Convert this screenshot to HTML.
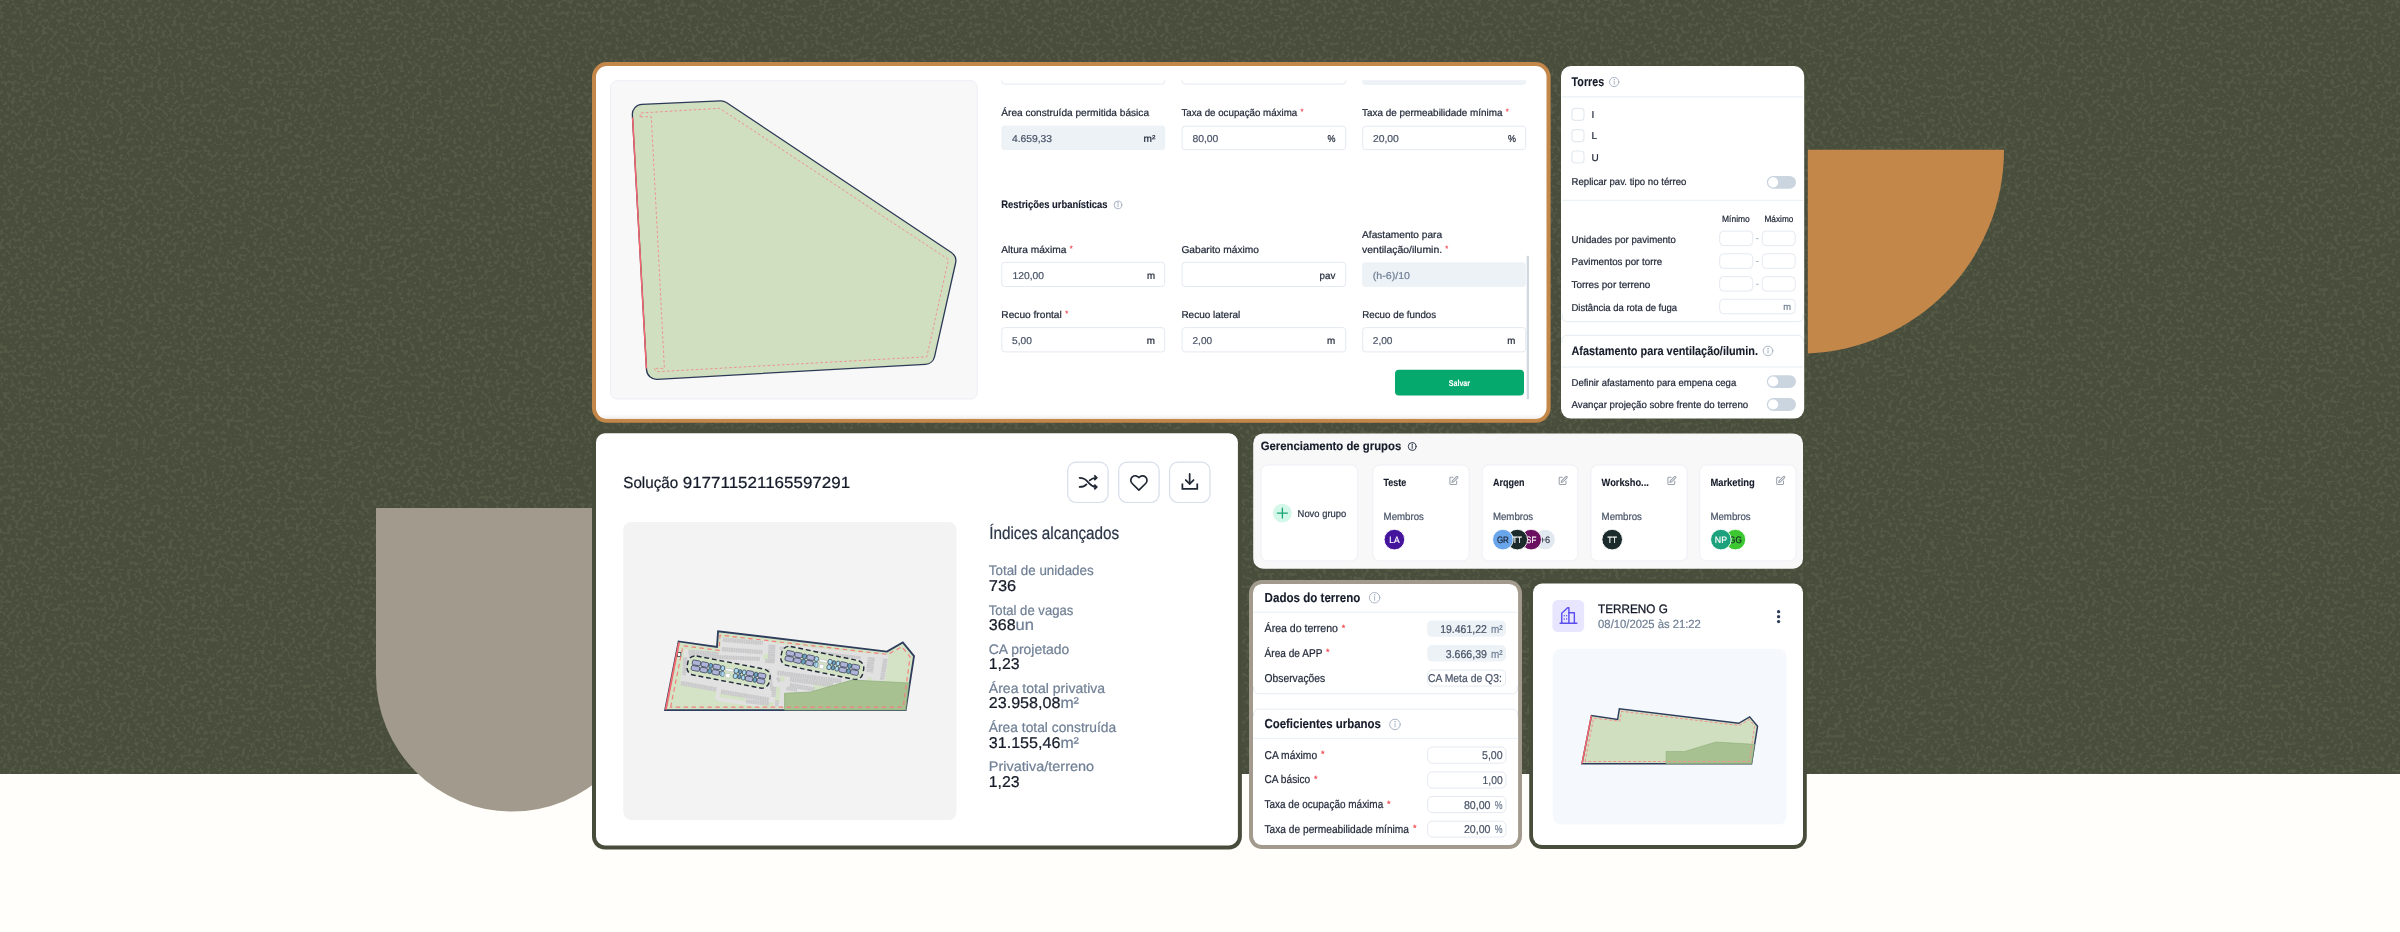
<!DOCTYPE html>
<html lang="pt-BR"><head><meta charset="utf-8"><title>Arqgen</title>
<style>
html,body{margin:0;padding:0;background:#fffefa;}
body{width:2400px;height:932px;overflow:hidden;position:relative;font-family:"Liberation Sans", sans-serif;}
svg{position:absolute;left:0;top:0;display:block;font-family:"Liberation Sans", sans-serif;will-change:transform;text-rendering:geometricPrecision;}
text{white-space:pre;}
</style></head><body>
<svg width="2400" height="932" viewBox="0 0 2400 932">
<defs>
<filter id="grain" x="0" y="0" width="100%" height="100%" color-interpolation-filters="sRGB">
<feTurbulence type="fractalNoise" baseFrequency="0.26" numOctaves="2" seed="7" result="n"/>
<feColorMatrix in="n" type="matrix" values="0 0 0 0 0.345  0 0 0 0 0.365  0 0 0 0 0.285  10 0 0 0 -5.3"/>
</filter>
</defs>
<rect x="0.00" y="0.00" width="2400.00" height="774.00" fill="#494e3c" />
<rect x="0" y="0" width="2400" height="774" filter="url(#grain)" opacity="0.75"/>
<rect x="0.00" y="774.00" width="2400.00" height="158.00" fill="#fffefa" />
<path d="M1807.8 149.8H2004A203.5 203.5 0 0 1 1807.8 353.4Z" fill="#c4874a"/>
<path d="M376 508H648V675.5A136 136 0 0 1 376 675.5Z" fill="#a29b8d"/>
<rect x="592.00" y="62.00" width="958.60" height="360.80" rx="15" fill="#c4874a" />
<rect x="596.00" y="66.00" width="950.50" height="352.70" rx="11" fill="#ffffff" />
<linearGradient id="c1sh" x1="0" y1="0" x2="0" y2="1"><stop offset="0" stop-color="#ffffff"/><stop offset="1" stop-color="#eeeeee"/></linearGradient><clipPath id="c1in"><rect x="596" y="66" width="950.5" height="352.7" rx="11"/></clipPath>
<rect x="596" y="414.2" width="950.5" height="4.5" fill="url(#c1sh)" clip-path="url(#c1in)"/>
<rect x="610.60" y="80.70" width="366.60" height="318.30" rx="6.5" fill="#f8f8f9" stroke="#eceff4" stroke-width="1" />
<path d="M632.36 114.89A10 10 0 0 1 641.90 104.35L720.43 100.85A10 10 0 0 1 726.42 102.52L951.38 252.49A10 10 0 0 1 955.59 263.00L934.56 356.53A10 10 0 0 1 925.36 364.32L657.09 379.34A10 10 0 0 1 646.54 369.91Z" fill="#d1dfc1" stroke="#2c3a57" stroke-width="1.3"/>
<path d="M632.6 117.5L646.4 368.5" stroke="#f4646c" stroke-width="1.5" fill="none"/>
<path d="M640.2 117V113L719.6 108.3L948.5 259.5L926.8 356.8L657.3 371.7L653.7 368.4H664.4L651.3 116.8H640.2" fill="none" stroke="#f47f83" stroke-width="0.8" stroke-dasharray="2.6 2.2"/>
<clipPath id="c1clip"><rect x="990" y="80.3" width="545" height="30"/></clipPath>
<g clip-path="url(#c1clip)">
<rect x="1001.80" y="60.50" width="163.00" height="23.60" rx="3.0" fill="#fff" stroke="#e4e9f0" stroke-width="1" />
<rect x="1182.10" y="60.50" width="163.60" height="23.60" rx="3.0" fill="#fff" stroke="#e4e9f0" stroke-width="1" />
<rect x="1362.20" y="60.00" width="164.00" height="24.90" rx="3.5" fill="#edf2f7" />
</g>
<text x="1001.30" y="116.00" font-size="10" fill="#1f2636" textLength="147.70" lengthAdjust="spacingAndGlyphs"  stroke="#1f2636" stroke-width="0.22">Área construída permitida básica</text>
<text x="1181.40" y="116.00" font-size="10" fill="#1f2636" textLength="115.80" lengthAdjust="spacingAndGlyphs"  stroke="#1f2636" stroke-width="0.22">Taxa de ocupação máxima</text>
<text x="1300.50" y="114.10" font-size="7.6" fill="#f0424a"  stroke="#f0424a" stroke-width="0.2">*</text>
<text x="1362.10" y="116.00" font-size="10" fill="#1f2636" textLength="140.40" lengthAdjust="spacingAndGlyphs"  stroke="#1f2636" stroke-width="0.22">Taxa de permeabilidade mínima</text>
<text x="1505.80" y="114.10" font-size="7.6" fill="#f0424a"  stroke="#f0424a" stroke-width="0.2">*</text>
<rect x="1001.30" y="125.50" width="163.90" height="24.60" rx="3.5" fill="#edf2f7" />
<rect x="1182.10" y="126.20" width="163.60" height="23.40" rx="3.0" fill="#fff" stroke="#e4e9f0" stroke-width="1" />
<rect x="1362.70" y="126.20" width="163.00" height="23.40" rx="3.0" fill="#fff" stroke="#e4e9f0" stroke-width="1" />
<text x="1011.90" y="141.60" font-size="10" fill="#4a5568" textLength="40.20" lengthAdjust="spacingAndGlyphs"  stroke="#4a5568" stroke-width="0.22">4.659,33</text>
<text x="1143.50" y="141.60" font-size="10" fill="#1f2636" textLength="11.80" lengthAdjust="spacingAndGlyphs"  stroke="#1f2636" stroke-width="0.22">m²</text>
<text x="1192.40" y="141.60" font-size="10" fill="#4a5568" textLength="26.00" lengthAdjust="spacingAndGlyphs"  stroke="#4a5568" stroke-width="0.22">80,00</text>
<text x="1327.40" y="141.60" font-size="10" fill="#1f2636" textLength="8.00" lengthAdjust="spacingAndGlyphs"  stroke="#1f2636" stroke-width="0.22">%</text>
<text x="1372.90" y="141.60" font-size="10" fill="#4a5568" textLength="26.00" lengthAdjust="spacingAndGlyphs"  stroke="#4a5568" stroke-width="0.22">20,00</text>
<text x="1507.90" y="141.60" font-size="10" fill="#1f2636" textLength="8.00" lengthAdjust="spacingAndGlyphs"  stroke="#1f2636" stroke-width="0.22">%</text>
<text x="1001.30" y="208.30" font-size="10.8" fill="#151b29" font-weight="700" textLength="106.20" lengthAdjust="spacingAndGlyphs"  stroke="#151b29" stroke-width="0.12">Restrições urbanísticas</text>
<g stroke="#a0aec0" fill="none" stroke-width="0.9" stroke-linecap="round"><circle cx="1118.00" cy="204.90" r="3.85"/><path d="M1118.00 204.04V206.79"/><circle cx="1118.00" cy="202.75" r="0.2" /></g>
<text x="1001.30" y="252.90" font-size="10" fill="#1f2636" textLength="65.00" lengthAdjust="spacingAndGlyphs"  stroke="#1f2636" stroke-width="0.22">Altura máxima</text>
<text x="1069.70" y="251.00" font-size="7.6" fill="#f0424a"  stroke="#f0424a" stroke-width="0.2">*</text>
<text x="1181.40" y="252.90" font-size="10" fill="#1f2636" textLength="77.60" lengthAdjust="spacingAndGlyphs"  stroke="#1f2636" stroke-width="0.22">Gabarito máximo</text>
<text x="1362.10" y="237.50" font-size="10" fill="#1f2636" textLength="80.00" lengthAdjust="spacingAndGlyphs"  stroke="#1f2636" stroke-width="0.22">Afastamento para</text>
<text x="1362.10" y="252.90" font-size="10" fill="#1f2636" textLength="80.00" lengthAdjust="spacingAndGlyphs"  stroke="#1f2636" stroke-width="0.22">ventilação/ilumin.</text>
<text x="1445.30" y="251.00" font-size="7.6" fill="#f0424a"  stroke="#f0424a" stroke-width="0.2">*</text>
<rect x="1001.80" y="262.30" width="162.90" height="24.20" rx="3.0" fill="#fff" stroke="#e4e9f0" stroke-width="1" />
<rect x="1182.10" y="262.30" width="163.60" height="24.20" rx="3.0" fill="#fff" stroke="#e4e9f0" stroke-width="1" />
<rect x="1362.20" y="262.20" width="163.60" height="24.70" rx="3.5" fill="#edf2f7" />
<text x="1012.50" y="278.70" font-size="10" fill="#4a5568" textLength="31.50" lengthAdjust="spacingAndGlyphs"  stroke="#4a5568" stroke-width="0.22">120,00</text>
<text x="1146.90" y="278.70" font-size="10" fill="#1f2636" textLength="8.10" lengthAdjust="spacingAndGlyphs"  stroke="#1f2636" stroke-width="0.22">m</text>
<text x="1319.60" y="278.60" font-size="10" fill="#1f2636" textLength="15.80" lengthAdjust="spacingAndGlyphs"  stroke="#1f2636" stroke-width="0.22">pav</text>
<text x="1372.80" y="278.70" font-size="10" fill="#718096" textLength="37.20" lengthAdjust="spacingAndGlyphs"  stroke="#718096" stroke-width="0.22">(h-6)/10</text>
<text x="1001.30" y="317.90" font-size="10" fill="#1f2636" textLength="60.50" lengthAdjust="spacingAndGlyphs"  stroke="#1f2636" stroke-width="0.22">Recuo frontal</text>
<text x="1065.30" y="316.00" font-size="7.6" fill="#f0424a"  stroke="#f0424a" stroke-width="0.2">*</text>
<text x="1181.40" y="317.90" font-size="10" fill="#1f2636" textLength="58.90" lengthAdjust="spacingAndGlyphs"  stroke="#1f2636" stroke-width="0.22">Recuo lateral</text>
<text x="1362.20" y="317.90" font-size="10" fill="#1f2636" textLength="74.00" lengthAdjust="spacingAndGlyphs"  stroke="#1f2636" stroke-width="0.22">Recuo de fundos</text>
<rect x="1001.80" y="327.60" width="162.90" height="24.30" rx="3.0" fill="#fff" stroke="#e4e9f0" stroke-width="1" />
<rect x="1182.10" y="327.60" width="163.60" height="24.30" rx="3.0" fill="#fff" stroke="#e4e9f0" stroke-width="1" />
<rect x="1362.70" y="327.60" width="163.00" height="24.30" rx="3.0" fill="#fff" stroke="#e4e9f0" stroke-width="1" />
<text x="1012.00" y="343.70" font-size="10" fill="#4a5568" textLength="19.80" lengthAdjust="spacingAndGlyphs"  stroke="#4a5568" stroke-width="0.22">5,00</text>
<text x="1146.70" y="343.70" font-size="10" fill="#1f2636" textLength="8.20" lengthAdjust="spacingAndGlyphs"  stroke="#1f2636" stroke-width="0.22">m</text>
<text x="1192.50" y="343.70" font-size="10" fill="#4a5568" textLength="19.60" lengthAdjust="spacingAndGlyphs"  stroke="#4a5568" stroke-width="0.22">2,00</text>
<text x="1327.10" y="343.70" font-size="10" fill="#1f2636" textLength="8.20" lengthAdjust="spacingAndGlyphs"  stroke="#1f2636" stroke-width="0.22">m</text>
<text x="1372.80" y="343.70" font-size="10" fill="#4a5568" textLength="19.70" lengthAdjust="spacingAndGlyphs"  stroke="#4a5568" stroke-width="0.22">2,00</text>
<text x="1507.30" y="343.70" font-size="10" fill="#1f2636" textLength="8.10" lengthAdjust="spacingAndGlyphs"  stroke="#1f2636" stroke-width="0.22">m</text>
<rect x="1395.00" y="369.70" width="129.00" height="25.90" rx="4" fill="#05a86d" />
<text x="1448.80" y="386.00" font-size="8.5" fill="#ffffff" font-weight="700" textLength="21.20" lengthAdjust="spacingAndGlyphs"  stroke="#ffffff" stroke-width="0.12">Salvar</text>
<rect x="1526.70" y="255.80" width="2.30" height="143.40" fill="#cfd8e0" />
<rect x="1561.00" y="66.00" width="243.20" height="352.60" rx="10" fill="#ffffff" />
<text x="1571.60" y="85.80" font-size="12.8" fill="#151b29" font-weight="700" textLength="32.60" lengthAdjust="spacingAndGlyphs"  stroke="#151b29" stroke-width="0.12">Torres</text>
<g stroke="#a0aec0" fill="none" stroke-width="0.9" stroke-linecap="round"><circle cx="1614.20" cy="82.00" r="4.65"/><path d="M1614.20 80.98V84.24"/><circle cx="1614.20" cy="79.45" r="0.2" /></g>
<rect x="1562.00" y="96.20" width="241.20" height="1.40" fill="#edf2f7" />
<rect x="1571.90" y="108.40" width="12.10" height="12.00" rx="3.4" fill="#fff" stroke="#e4e9f0" stroke-width="1.2" />
<text x="1591.60" y="118.30" font-size="10" fill="#1f2636"  stroke="#1f2636" stroke-width="0.22">I</text>
<rect x="1571.90" y="129.70" width="12.10" height="12.00" rx="3.4" fill="#fff" stroke="#e4e9f0" stroke-width="1.2" />
<text x="1591.60" y="139.40" font-size="10" fill="#1f2636"  stroke="#1f2636" stroke-width="0.22">L</text>
<rect x="1571.90" y="151.00" width="12.10" height="12.00" rx="3.4" fill="#fff" stroke="#e4e9f0" stroke-width="1.2" />
<text x="1591.60" y="160.60" font-size="10" fill="#1f2636"  stroke="#1f2636" stroke-width="0.22">U</text>
<text x="1571.50" y="185.40" font-size="10" fill="#1f2636" textLength="114.90" lengthAdjust="spacingAndGlyphs"  stroke="#1f2636" stroke-width="0.22">Replicar pav. tipo no térreo</text>
<rect x="1766.80" y="176.00" width="29.20" height="12.70" rx="6.349999999999994" fill="#cbd5e0" />
<circle cx="1773.15" cy="182.35" r="5.05" fill="#fff"/>
<rect x="1562.00" y="199.70" width="241.20" height="1.30" fill="#edf2f7" />
<text x="1722.00" y="221.70" font-size="9" fill="#1f2636" textLength="27.80" lengthAdjust="spacingAndGlyphs"  stroke="#1f2636" stroke-width="0.22">Mínimo</text>
<text x="1764.50" y="221.70" font-size="9" fill="#1f2636" textLength="28.90" lengthAdjust="spacingAndGlyphs"  stroke="#1f2636" stroke-width="0.22">Máximo</text>
<text x="1571.50" y="242.60" font-size="10" fill="#1f2636" textLength="104.40" lengthAdjust="spacingAndGlyphs"  stroke="#1f2636" stroke-width="0.22">Unidades por pavimento</text>
<rect x="1719.70" y="231.10" width="33.00" height="14.50" rx="4.0" fill="#fff" stroke="#e4e9f0" stroke-width="1" />
<rect x="1762.20" y="231.10" width="33.00" height="14.50" rx="4.0" fill="#fff" stroke="#e4e9f0" stroke-width="1" />
<rect x="1756.00" y="238.25" width="2.60" height="0.90" fill="#a0aec0" />
<text x="1571.50" y="265.30" font-size="10" fill="#1f2636" textLength="90.60" lengthAdjust="spacingAndGlyphs"  stroke="#1f2636" stroke-width="0.22">Pavimentos por torre</text>
<rect x="1719.70" y="253.80" width="33.00" height="14.60" rx="4.0" fill="#fff" stroke="#e4e9f0" stroke-width="1" />
<rect x="1762.20" y="253.80" width="33.00" height="14.60" rx="4.0" fill="#fff" stroke="#e4e9f0" stroke-width="1" />
<rect x="1756.00" y="261.00" width="2.60" height="0.90" fill="#a0aec0" />
<text x="1571.50" y="288.10" font-size="10" fill="#1f2636" textLength="78.90" lengthAdjust="spacingAndGlyphs"  stroke="#1f2636" stroke-width="0.22">Torres por terreno</text>
<rect x="1719.70" y="276.60" width="33.00" height="14.50" rx="4.0" fill="#fff" stroke="#e4e9f0" stroke-width="1" />
<rect x="1762.20" y="276.60" width="33.00" height="14.50" rx="4.0" fill="#fff" stroke="#e4e9f0" stroke-width="1" />
<rect x="1756.00" y="283.75" width="2.60" height="0.90" fill="#a0aec0" />
<text x="1571.50" y="311.00" font-size="10" fill="#1f2636" textLength="105.60" lengthAdjust="spacingAndGlyphs"  stroke="#1f2636" stroke-width="0.22">Distância da rota de fuga</text>
<rect x="1719.70" y="299.20" width="75.50" height="14.60" rx="4.0" fill="#fff" stroke="#e4e9f0" stroke-width="1" />
<text x="1783.30" y="310.20" font-size="9.5" fill="#718096" textLength="7.80" lengthAdjust="spacingAndGlyphs"  stroke="#718096" stroke-width="0.22">m</text>
<path d="M1562 314V317A5 5 0 0 0 1567 321.6H1798.2A5 5 0 0 0 1803.2 317V314" fill="none" stroke="#e6ebf2" stroke-width="1"/>
<path d="M1562 343V340.3A5 5 0 0 1 1567 335.3H1798.2A5 5 0 0 1 1803.2 340.3V343" fill="none" stroke="#e6ebf2" stroke-width="1"/>
<text x="1571.50" y="354.60" font-size="12.4" fill="#151b29" font-weight="700" textLength="186.50" lengthAdjust="spacingAndGlyphs"  stroke="#151b29" stroke-width="0.12">Afastamento para ventilação/ilumin.</text>
<g stroke="#a0aec0" fill="none" stroke-width="0.9" stroke-linecap="round"><circle cx="1768.00" cy="350.90" r="4.80"/><path d="M1768.00 349.85V353.21"/><circle cx="1768.00" cy="348.27" r="0.2" /></g>
<rect x="1562.00" y="366.40" width="241.20" height="1.30" fill="#edf2f7" />
<text x="1571.50" y="385.50" font-size="10" fill="#1f2636" textLength="164.70" lengthAdjust="spacingAndGlyphs"  stroke="#1f2636" stroke-width="0.22">Definir afastamento para empena cega</text>
<rect x="1766.80" y="375.20" width="29.20" height="12.70" rx="6.349999999999994" fill="#cbd5e0" />
<circle cx="1773.15" cy="381.55" r="5.05" fill="#fff"/>
<text x="1571.50" y="408.30" font-size="10" fill="#1f2636" textLength="176.70" lengthAdjust="spacingAndGlyphs"  stroke="#1f2636" stroke-width="0.22">Avançar projeção sobre frente do terreno</text>
<rect x="1766.80" y="398.10" width="29.20" height="12.80" rx="6.399999999999977" fill="#cbd5e0" />
<circle cx="1773.20" cy="404.50" r="5.10" fill="#fff"/>
<rect x="592.00" y="429.30" width="649.90" height="420.20" rx="13" fill="#484d3b" />
<rect x="596.00" y="433.30" width="641.90" height="412.20" rx="9" fill="#ffffff" />
<text x="623.30" y="488.10" font-size="16" fill="#151b29" textLength="54.80" lengthAdjust="spacingAndGlyphs"  stroke="#151b29" stroke-width="0.22">Solução</text>
<text x="682.70" y="488.10" font-size="16" fill="#151b29" textLength="167.40" lengthAdjust="spacingAndGlyphs"  stroke="#151b29" stroke-width="0.22">917711521165597291</text>
<rect x="623.30" y="521.90" width="333.30" height="298.10" rx="8" fill="#f3f3f3" />
<rect x="1067.70" y="462.10" width="40.40" height="40.40" rx="8.4" fill="#fff" stroke="#d6deea" stroke-width="1.2" />
<rect x="1118.70" y="462.10" width="40.40" height="40.40" rx="8.4" fill="#fff" stroke="#d6deea" stroke-width="1.2" />
<rect x="1169.60" y="462.10" width="40.40" height="40.40" rx="8.4" fill="#fff" stroke="#d6deea" stroke-width="1.2" />
<g transform="translate(1050,450) scale(0.075092)" fill="none" stroke="#1f2733" stroke-width="23" stroke-linecap="round" stroke-linejoin="miter"><path d="M394 370C470 370 482 402 510 432S560 492 612 492"/><path d="M394 492C440 492 466 480 486 458"/><path d="M528 406C550 385 580 370 612 370"/><path d="M590 338L622 370L590 402" stroke-linecap="butt"/><path d="M590 460L622 492L590 524" stroke-linecap="butt"/></g>
<g transform="translate(1128.1,472.2) scale(0.9)" fill="none" stroke="#1f2733" stroke-width="1.85" stroke-linecap="round" stroke-linejoin="round"><path d="M19.5 12.572l-7.5 7.428l-7.5 -7.428a5 5 0 1 1 7.5 -6.566a5 5 0 1 1 7.5 6.572"/></g>
<g transform="translate(1050,450) scale(0.075092)" fill="none" stroke="#1f2733" stroke-width="23" stroke-linecap="butt" stroke-linejoin="miter"><path d="M1860 318V450" stroke-linecap="round"/><path d="M1808 400L1860 452L1912 400" stroke-linecap="round" stroke-linejoin="round"/><path d="M1763 446V519H1961V446"/></g>
<text x="989.20" y="539.40" font-size="17.6" fill="#2d3748" textLength="130.00" lengthAdjust="spacingAndGlyphs"  stroke="#2d3748" stroke-width="0.22">Índices alcançados</text>
<text x="988.80" y="575.30" font-size="13.8" fill="#718096" textLength="104.90" lengthAdjust="spacingAndGlyphs"  stroke="#718096" stroke-width="0.22">Total de unidades</text>
<text x="988.80" y="590.70" font-size="15.6" fill="#151b29" textLength="27.40" lengthAdjust="spacingAndGlyphs"  stroke="#151b29" stroke-width="0.22">736</text>
<text x="988.80" y="614.50" font-size="13.8" fill="#718096" textLength="84.50" lengthAdjust="spacingAndGlyphs"  stroke="#718096" stroke-width="0.22">Total de vagas</text>
<text x="988.80" y="629.90" font-size="15.6" fill="#151b29" textLength="26.80" lengthAdjust="spacingAndGlyphs"  stroke="#151b29" stroke-width="0.22">368</text>
<text x="1015.60" y="629.90" font-size="15.6" fill="#718096" textLength="18.40" lengthAdjust="spacingAndGlyphs"  stroke="#718096" stroke-width="0.22">un</text>
<text x="988.80" y="653.70" font-size="13.8" fill="#718096" textLength="80.50" lengthAdjust="spacingAndGlyphs"  stroke="#718096" stroke-width="0.22">CA projetado</text>
<text x="988.80" y="669.10" font-size="15.6" fill="#151b29" textLength="30.90" lengthAdjust="spacingAndGlyphs"  stroke="#151b29" stroke-width="0.22">1,23</text>
<text x="988.80" y="692.90" font-size="13.8" fill="#718096" textLength="116.30" lengthAdjust="spacingAndGlyphs"  stroke="#718096" stroke-width="0.22">Área total privativa</text>
<text x="988.80" y="708.30" font-size="15.6" fill="#151b29" textLength="71.60" lengthAdjust="spacingAndGlyphs"  stroke="#151b29" stroke-width="0.22">23.958,08</text>
<text x="1060.40" y="708.30" font-size="15.6" fill="#718096" textLength="18.50" lengthAdjust="spacingAndGlyphs"  stroke="#718096" stroke-width="0.22">m²</text>
<text x="988.80" y="732.10" font-size="13.8" fill="#718096" textLength="127.40" lengthAdjust="spacingAndGlyphs"  stroke="#718096" stroke-width="0.22">Área total construída</text>
<text x="988.80" y="747.50" font-size="15.6" fill="#151b29" textLength="71.60" lengthAdjust="spacingAndGlyphs"  stroke="#151b29" stroke-width="0.22">31.155,46</text>
<text x="1060.40" y="747.50" font-size="15.6" fill="#718096" textLength="18.50" lengthAdjust="spacingAndGlyphs"  stroke="#718096" stroke-width="0.22">m²</text>
<text x="988.80" y="771.30" font-size="13.8" fill="#718096" textLength="105.30" lengthAdjust="spacingAndGlyphs"  stroke="#718096" stroke-width="0.22">Privativa/terreno</text>
<text x="988.80" y="786.70" font-size="15.6" fill="#151b29" textLength="30.90" lengthAdjust="spacingAndGlyphs"  stroke="#151b29" stroke-width="0.22">1,23</text>
<g transform="translate(660,625) scale(0.09655)">
<path d="M53 881.5L193 170L590 228L601.5 65L2351 275L2515 181.5L2631 321.5L2544 881.5Z" fill="#d4e3c5"/>
<path d="M250 250L622 282L632 128L1100 163L1225 192L2090 290L2286 300L2366 312L2331 580L1986 570L1556 695L1346 700L1290 705L1290 850L1180 850L1180 800L1060 800L1040 850L610 790L570 760L585 690L215 620L210 590Z" fill="#e1e1e1"/>
<g fill="#d4e3c5"><path d="M1075 300L1140 305L1135 365L1070 360Z"/><path d="M620 705L885 750L880 790L612 745Z"/><path d="M1245 530L1290 535L1288 585L1243 580Z"/><path d="M1195 640L1245 645L1240 800L1190 795Z"/><path d="M1600 615L1800 585L1790 640L1560 690Z"/><path d="M2150 540L2190 542L2188 575L2148 573Z"/></g>
<path d="M650 152L1065 186" stroke="#c9c9cb" stroke-width="45" stroke-dasharray="20 4" fill="none"/>
<path d="M640 250L1060 282" stroke="#c9c9cb" stroke-width="45" stroke-dasharray="20 4" fill="none"/>
<path d="M295 275L610 300" stroke="#c9c9cb" stroke-width="41" stroke-dasharray="20 4" fill="none"/>
<path d="M300 318L1035 352" stroke="#c9c9cb" stroke-width="43" stroke-dasharray="20 4" fill="none"/>
<path d="M1160 205L1150 395" stroke="#c9c9cb" stroke-width="73" stroke-dasharray="20 4" fill="none"/>
<path d="M1090 372L1185 380" stroke="#c9c9cb" stroke-width="39" stroke-dasharray="20 4" fill="none"/>
<path d="M262 335L250 520" stroke="#c9c9cb" stroke-width="41" stroke-dasharray="20 4" fill="none"/>
<path d="M218 602L585 668" stroke="#c9c9cb" stroke-width="47" stroke-dasharray="20 4" fill="none"/>
<path d="M632 690L1130 775" stroke="#c9c9cb" stroke-width="47" stroke-dasharray="20 4" fill="none"/>
<path d="M890 790L1130 815" stroke="#c9c9cb" stroke-width="43" stroke-dasharray="20 4" fill="none"/>
<path d="M1185 640L1175 745" stroke="#c9c9cb" stroke-width="43" stroke-dasharray="20 4" fill="none"/>
<path d="M1212 780L1208 840" stroke="#c9c9cb" stroke-width="37" stroke-dasharray="20 4" fill="none"/>
<path d="M1215 495L1880 585" stroke="#c9c9cb" stroke-width="49" stroke-dasharray="20 4" fill="none"/>
<path d="M1346 562L1790 622" stroke="#c9c9cb" stroke-width="49" stroke-dasharray="20 4" fill="none"/>
<path d="M1346 622L1600 668" stroke="#c9c9cb" stroke-width="47" stroke-dasharray="20 4" fill="none"/>
<path d="M1310 655L1420 672" stroke="#c9c9cb" stroke-width="39" stroke-dasharray="20 4" fill="none"/>
<path d="M2190 335L2170 490" stroke="#c9c9cb" stroke-width="73" stroke-dasharray="20 4" fill="none"/>
<path d="M2335 350L2300 570" stroke="#c9c9cb" stroke-width="47" stroke-dasharray="20 4" fill="none"/>
<path d="M1215 545L1240 590" stroke="#c9c9cb" stroke-width="33" stroke-dasharray="20 4" fill="none"/>
<path d="M1240 240L2080 340" stroke="#c9c9cb" stroke-width="33" stroke-dasharray="20 4" fill="none"/>
<path d="M1120 455L1165 690" stroke="#c9c9cb" stroke-width="33" stroke-dasharray="20 4" fill="none"/>
<g transform="translate(710,487) rotate(11)">
<rect x="-433" y="-100" width="866" height="200" rx="78" fill="#d4e3c5" stroke="#232a3a" stroke-width="15" stroke-dasharray="50 30"/>
<rect x="-387" y="-54" width="86" height="50" rx="14" fill="#aeb3d8" stroke="#2e3550" stroke-width="7"/>
<rect x="-387" y="4" width="86" height="50" rx="14" fill="#aeb3d8" stroke="#2e3550" stroke-width="7"/>
<rect x="-295" y="-54" width="76" height="50" rx="14" fill="#aeb3d8" stroke="#2e3550" stroke-width="7"/>
<rect x="-295" y="4" width="76" height="50" rx="14" fill="#aeb3d8" stroke="#2e3550" stroke-width="7"/>
<rect x="-212" y="-52" width="37" height="48" rx="14" fill="#6aa6c2" stroke="#2e3550" stroke-width="7"/>
<rect x="-212" y="4" width="37" height="48" rx="14" fill="#6aa6c2" stroke="#2e3550" stroke-width="7"/>
<rect x="-168" y="-54" width="76" height="50" rx="14" fill="#aeb3d8" stroke="#2e3550" stroke-width="7"/>
<rect x="-168" y="4" width="76" height="50" rx="14" fill="#aeb3d8" stroke="#2e3550" stroke-width="7"/>
<rect x="-86" y="-52" width="38" height="48" rx="14" fill="#aadcef" stroke="#2e3550" stroke-width="7"/>
<rect x="-86" y="4" width="38" height="48" rx="14" fill="#aadcef" stroke="#2e3550" stroke-width="7"/>
<rect x="-36" y="-34" width="82" height="24" fill="#fff" stroke="#8a8fa5" stroke-width="3"/>
<rect x="-70" y="8" width="30" height="50" rx="6" fill="#aadcef" stroke="#3c425c" stroke-width="4"/>
<rect x="-22" y="16" width="44" height="44" fill="#fff" stroke="#8a8fa5" stroke-width="3"/>
<rect x="56" y="-52" width="41" height="48" rx="14" fill="#aadcef" stroke="#2e3550" stroke-width="7"/>
<rect x="56" y="4" width="41" height="48" rx="14" fill="#aadcef" stroke="#2e3550" stroke-width="7"/>
<rect x="103" y="-48" width="30" height="44" rx="14" fill="#6aa6c2" stroke="#2e3550" stroke-width="7"/>
<rect x="103" y="4" width="30" height="44" rx="14" fill="#6aa6c2" stroke="#2e3550" stroke-width="7"/>
<rect x="142" y="-52" width="36" height="48" rx="14" fill="#aadcef" stroke="#2e3550" stroke-width="7"/>
<rect x="142" y="4" width="36" height="48" rx="14" fill="#aadcef" stroke="#2e3550" stroke-width="7"/>
<rect x="184" y="-54" width="76" height="50" rx="14" fill="#aeb3d8" stroke="#2e3550" stroke-width="7"/>
<rect x="184" y="4" width="76" height="50" rx="14" fill="#aeb3d8" stroke="#2e3550" stroke-width="7"/>
<rect x="266" y="-52" width="35" height="48" rx="14" fill="#6aa6c2" stroke="#2e3550" stroke-width="7"/>
<rect x="266" y="4" width="35" height="48" rx="14" fill="#6aa6c2" stroke="#2e3550" stroke-width="7"/>
<rect x="306" y="-54" width="81" height="50" rx="14" fill="#aeb3d8" stroke="#2e3550" stroke-width="7"/>
<rect x="306" y="4" width="81" height="50" rx="14" fill="#aeb3d8" stroke="#2e3550" stroke-width="7"/>
</g>
<g transform="translate(1681,393) rotate(11.8)">
<rect x="-433" y="-100" width="866" height="200" rx="78" fill="#d4e3c5" stroke="#232a3a" stroke-width="15" stroke-dasharray="50 30"/>
<rect x="-387" y="-54" width="86" height="50" rx="14" fill="#aeb3d8" stroke="#2e3550" stroke-width="7"/>
<rect x="-387" y="4" width="86" height="50" rx="14" fill="#aeb3d8" stroke="#2e3550" stroke-width="7"/>
<rect x="-295" y="-54" width="76" height="50" rx="14" fill="#aeb3d8" stroke="#2e3550" stroke-width="7"/>
<rect x="-295" y="4" width="76" height="50" rx="14" fill="#aeb3d8" stroke="#2e3550" stroke-width="7"/>
<rect x="-212" y="-52" width="37" height="48" rx="14" fill="#6aa6c2" stroke="#2e3550" stroke-width="7"/>
<rect x="-212" y="4" width="37" height="48" rx="14" fill="#6aa6c2" stroke="#2e3550" stroke-width="7"/>
<rect x="-168" y="-54" width="76" height="50" rx="14" fill="#aeb3d8" stroke="#2e3550" stroke-width="7"/>
<rect x="-168" y="4" width="76" height="50" rx="14" fill="#aeb3d8" stroke="#2e3550" stroke-width="7"/>
<rect x="-86" y="-52" width="38" height="48" rx="14" fill="#aadcef" stroke="#2e3550" stroke-width="7"/>
<rect x="-86" y="4" width="38" height="48" rx="14" fill="#aadcef" stroke="#2e3550" stroke-width="7"/>
<rect x="-36" y="-34" width="82" height="24" fill="#fff" stroke="#8a8fa5" stroke-width="3"/>
<rect x="-70" y="8" width="30" height="50" rx="6" fill="#aadcef" stroke="#3c425c" stroke-width="4"/>
<rect x="-22" y="16" width="44" height="44" fill="#fff" stroke="#8a8fa5" stroke-width="3"/>
<rect x="56" y="-52" width="41" height="48" rx="14" fill="#aadcef" stroke="#2e3550" stroke-width="7"/>
<rect x="56" y="4" width="41" height="48" rx="14" fill="#aadcef" stroke="#2e3550" stroke-width="7"/>
<rect x="103" y="-48" width="30" height="44" rx="14" fill="#6aa6c2" stroke="#2e3550" stroke-width="7"/>
<rect x="103" y="4" width="30" height="44" rx="14" fill="#6aa6c2" stroke="#2e3550" stroke-width="7"/>
<rect x="142" y="-52" width="36" height="48" rx="14" fill="#aadcef" stroke="#2e3550" stroke-width="7"/>
<rect x="142" y="4" width="36" height="48" rx="14" fill="#aadcef" stroke="#2e3550" stroke-width="7"/>
<rect x="184" y="-54" width="76" height="50" rx="14" fill="#aeb3d8" stroke="#2e3550" stroke-width="7"/>
<rect x="184" y="4" width="76" height="50" rx="14" fill="#aeb3d8" stroke="#2e3550" stroke-width="7"/>
<rect x="266" y="-52" width="35" height="48" rx="14" fill="#6aa6c2" stroke="#2e3550" stroke-width="7"/>
<rect x="266" y="4" width="35" height="48" rx="14" fill="#6aa6c2" stroke="#2e3550" stroke-width="7"/>
<rect x="306" y="-54" width="81" height="50" rx="14" fill="#aeb3d8" stroke="#2e3550" stroke-width="7"/>
<rect x="306" y="4" width="81" height="50" rx="14" fill="#aeb3d8" stroke="#2e3550" stroke-width="7"/>
</g>
<rect x="182" y="285" width="34" height="40" fill="#fff" stroke="#232a3a" stroke-width="8"/>
<path d="M53 881.5L193 170L590 228L601.5 65L2351 275L2515 181.5L2631 321.5L2544 881.5Z" fill="none" stroke="#2f3d5c" stroke-width="19" stroke-linejoin="miter"/>
<path d="M1290 881L1290 707L1556 695L1990 570L2578 600L2544 881Z" fill="#a7c191" stroke="#8fae79" stroke-width="7"/>
<path d="M110 850L238 215L612 262L622 105L2360 305L2505 225L2590 330L2520 850Z" fill="none" stroke="#f47f80" stroke-width="12" stroke-dasharray="46 36"/>
<path d="M60 876L197 180" stroke="#f26a70" stroke-width="20"/>
</g>
<rect x="1253.20" y="433.40" width="549.80" height="135.30" rx="10" fill="#f8f8f8" />
<text x="1260.70" y="450.40" font-size="12.2" fill="#151b29" font-weight="700" textLength="140.60" lengthAdjust="spacingAndGlyphs"  stroke="#151b29" stroke-width="0.12">Gerenciamento de grupos</text>
<g stroke="#2d3748" fill="none" stroke-width="1.0" stroke-linecap="round"><circle cx="1412.20" cy="446.50" r="3.90"/><path d="M1412.20 445.62V448.44"/><circle cx="1412.20" cy="444.30" r="0.2" /></g>
<rect x="1261.00" y="465.00" width="96.70" height="95.90" rx="6.5" fill="#ffffff" stroke="#edf0f5" stroke-width="1" />
<rect x="1372.90" y="465.00" width="96.20" height="95.90" rx="6.5" fill="#ffffff" stroke="#edf0f5" stroke-width="1" />
<rect x="1482.20" y="465.00" width="95.70" height="95.90" rx="6.5" fill="#ffffff" stroke="#edf0f5" stroke-width="1" />
<rect x="1590.90" y="465.00" width="96.20" height="95.90" rx="6.5" fill="#ffffff" stroke="#edf0f5" stroke-width="1" />
<rect x="1699.70" y="465.00" width="96.20" height="95.90" rx="6.5" fill="#ffffff" stroke="#edf0f5" stroke-width="1" />
<circle cx="1282.4" cy="513.1" r="9.4" fill="#d3f7e8"/>
<path d="M1277.4 513.1H1287.4M1282.4 508.1V518.1" stroke="#17a673" stroke-width="1.3" fill="none" stroke-linecap="round"/>
<text x="1297.60" y="516.70" font-size="10" fill="#2d3748" textLength="48.60" lengthAdjust="spacingAndGlyphs"  stroke="#2d3748" stroke-width="0.22">Novo grupo</text>
<text x="1383.60" y="485.70" font-size="10.6" fill="#151b29" font-weight="700" textLength="22.60" lengthAdjust="spacingAndGlyphs"  stroke="#151b29" stroke-width="0.12">Teste</text>
<g transform="translate(1448.70,475.60) scale(0.4000)" fill="none" stroke="#9aa1ab" stroke-width="2.6" stroke-linecap="round" stroke-linejoin="round"><path d="M11 4H5a2 2 0 0 0 -2 2v14a2 2 0 0 0 2 2h13a2 2 0 0 0 2 -2v-6.5"/><path d="M19.5 2.5a2.1 2.1 0 0 1 3 3L12 16l-4 1l1 -4Z"/></g>
<text x="1383.60" y="520.00" font-size="10.4" fill="#4a5568" textLength="40.30" lengthAdjust="spacingAndGlyphs"  stroke="#4a5568" stroke-width="0.22">Membros</text>
<text x="1492.90" y="485.70" font-size="10.6" fill="#151b29" font-weight="700" textLength="31.50" lengthAdjust="spacingAndGlyphs"  stroke="#151b29" stroke-width="0.12">Arqgen</text>
<g transform="translate(1558.00,475.60) scale(0.4000)" fill="none" stroke="#9aa1ab" stroke-width="2.6" stroke-linecap="round" stroke-linejoin="round"><path d="M11 4H5a2 2 0 0 0 -2 2v14a2 2 0 0 0 2 2h13a2 2 0 0 0 2 -2v-6.5"/><path d="M19.5 2.5a2.1 2.1 0 0 1 3 3L12 16l-4 1l1 -4Z"/></g>
<text x="1492.90" y="520.00" font-size="10.4" fill="#4a5568" textLength="40.30" lengthAdjust="spacingAndGlyphs"  stroke="#4a5568" stroke-width="0.22">Membros</text>
<text x="1601.60" y="485.70" font-size="10.6" fill="#151b29" font-weight="700" textLength="47.20" lengthAdjust="spacingAndGlyphs"  stroke="#151b29" stroke-width="0.12">Worksho...</text>
<g transform="translate(1666.70,475.60) scale(0.4000)" fill="none" stroke="#9aa1ab" stroke-width="2.6" stroke-linecap="round" stroke-linejoin="round"><path d="M11 4H5a2 2 0 0 0 -2 2v14a2 2 0 0 0 2 2h13a2 2 0 0 0 2 -2v-6.5"/><path d="M19.5 2.5a2.1 2.1 0 0 1 3 3L12 16l-4 1l1 -4Z"/></g>
<text x="1601.60" y="520.00" font-size="10.4" fill="#4a5568" textLength="40.30" lengthAdjust="spacingAndGlyphs"  stroke="#4a5568" stroke-width="0.22">Membros</text>
<text x="1710.40" y="485.70" font-size="10.6" fill="#151b29" font-weight="700" textLength="44.40" lengthAdjust="spacingAndGlyphs"  stroke="#151b29" stroke-width="0.12">Marketing</text>
<g transform="translate(1775.50,475.60) scale(0.4000)" fill="none" stroke="#9aa1ab" stroke-width="2.6" stroke-linecap="round" stroke-linejoin="round"><path d="M11 4H5a2 2 0 0 0 -2 2v14a2 2 0 0 0 2 2h13a2 2 0 0 0 2 -2v-6.5"/><path d="M19.5 2.5a2.1 2.1 0 0 1 3 3L12 16l-4 1l1 -4Z"/></g>
<text x="1710.40" y="520.00" font-size="10.4" fill="#4a5568" textLength="40.30" lengthAdjust="spacingAndGlyphs"  stroke="#4a5568" stroke-width="0.22">Membros</text>
<circle cx="1394.40" cy="539.60" r="10.3" fill="#44149c" stroke="#ffffff" stroke-width="0.9"/>
<text x="1394.40" y="542.95" font-size="9.2" fill="#ffffff" text-anchor="middle" textLength="10.40" lengthAdjust="spacingAndGlyphs"  stroke="#ffffff" stroke-width="0.15">LA</text>
<circle cx="1545.00" cy="539.60" r="10.3" fill="#e2e8f0" stroke="#ffffff" stroke-width="0.9"/>
<text x="1545.00" y="542.95" font-size="9.2" fill="#2d3748" text-anchor="middle" textLength="10.60" lengthAdjust="spacingAndGlyphs"  stroke="#2d3748" stroke-width="0.15">+6</text>
<circle cx="1531.20" cy="539.60" r="10.3" fill="#6b1060" stroke="#ffffff" stroke-width="0.9"/>
<text x="1531.20" y="542.95" font-size="9.2" fill="#ffffff" text-anchor="middle" textLength="10.20" lengthAdjust="spacingAndGlyphs"  stroke="#ffffff" stroke-width="0.15">SF</text>
<circle cx="1517.30" cy="539.60" r="10.3" fill="#1b2b2b" stroke="#ffffff" stroke-width="0.9"/>
<text x="1517.30" y="542.95" font-size="9.2" fill="#ffffff" text-anchor="middle" textLength="9.40" lengthAdjust="spacingAndGlyphs"  stroke="#ffffff" stroke-width="0.15">TT</text>
<circle cx="1502.90" cy="539.60" r="10.3" fill="#69a5ea" stroke="#ffffff" stroke-width="0.9"/>
<text x="1502.90" y="542.95" font-size="9.2" fill="#151b29" text-anchor="middle" textLength="12.00" lengthAdjust="spacingAndGlyphs"  stroke="#151b29" stroke-width="0.15">GR</text>
<circle cx="1612.20" cy="539.60" r="10.3" fill="#1b2b2b" stroke="#ffffff" stroke-width="0.9"/>
<text x="1612.20" y="542.95" font-size="9.2" fill="#ffffff" text-anchor="middle" textLength="9.40" lengthAdjust="spacingAndGlyphs"  stroke="#ffffff" stroke-width="0.15">TT</text>
<circle cx="1735.40" cy="539.60" r="10.3" fill="#3dc831" stroke="#ffffff" stroke-width="0.9"/>
<text x="1735.40" y="542.95" font-size="9.2" fill="#151b29" text-anchor="middle" textLength="12.80" lengthAdjust="spacingAndGlyphs"  stroke="#151b29" stroke-width="0.15">GG</text>
<circle cx="1720.90" cy="539.60" r="10.3" fill="#1ba17b" stroke="#ffffff" stroke-width="0.9"/>
<text x="1720.90" y="542.95" font-size="9.2" fill="#ffffff" text-anchor="middle" textLength="12.20" lengthAdjust="spacingAndGlyphs"  stroke="#ffffff" stroke-width="0.15">NP</text>
<rect x="1249.00" y="580.10" width="273.00" height="268.90" rx="13" fill="#a29b8d" />
<rect x="1253.00" y="583.90" width="265.10" height="261.20" rx="9" fill="#ffffff" />
<text x="1264.60" y="601.80" font-size="13" fill="#151b29" font-weight="700" textLength="95.80" lengthAdjust="spacingAndGlyphs"  stroke="#151b29" stroke-width="0.12">Dados do terreno</text>
<g stroke="#a0aec0" fill="none" stroke-width="0.9" stroke-linecap="round"><circle cx="1374.60" cy="597.70" r="5.25"/><path d="M1374.60 596.56V600.21"/><circle cx="1374.60" cy="594.85" r="0.2" /></g>
<rect x="1253.00" y="611.60" width="265.10" height="1.30" fill="#edf2f7" />
<text x="1264.60" y="632.40" font-size="11.4" fill="#1f2636" textLength="73.40" lengthAdjust="spacingAndGlyphs"  stroke="#1f2636" stroke-width="0.22">Área do terreno</text>
<text x="1264.60" y="656.80" font-size="11.4" fill="#1f2636" textLength="57.80" lengthAdjust="spacingAndGlyphs"  stroke="#1f2636" stroke-width="0.22">Área de APP</text>
<text x="1264.60" y="681.90" font-size="11.4" fill="#1f2636" textLength="60.50" lengthAdjust="spacingAndGlyphs"  stroke="#1f2636" stroke-width="0.22">Observações</text>
<text x="1341.70" y="630.92" font-size="9" fill="#f0424a"  stroke="#f0424a" stroke-width="0.2">*</text>
<text x="1326.10" y="655.32" font-size="9" fill="#f0424a"  stroke="#f0424a" stroke-width="0.2">*</text>
<rect x="1427.20" y="620.60" width="78.80" height="16.20" rx="5" fill="#edf2f7" />
<rect x="1427.20" y="645.00" width="78.80" height="16.50" rx="5" fill="#edf2f7" />
<rect x="1427.70" y="670.00" width="77.80" height="16.10" rx="4.5" fill="#fff" stroke="#e4e9f0" stroke-width="1" />
<text x="1440.20" y="633.10" font-size="11.4" fill="#4a5568" textLength="46.70" lengthAdjust="spacingAndGlyphs"  stroke="#4a5568" stroke-width="0.22">19.461,22</text>
<text x="1490.90" y="633.10" font-size="11.4" fill="#718096" textLength="11.60" lengthAdjust="spacingAndGlyphs"  stroke="#718096" stroke-width="0.22">m²</text>
<text x="1445.80" y="657.50" font-size="11.4" fill="#4a5568" textLength="41.10" lengthAdjust="spacingAndGlyphs"  stroke="#4a5568" stroke-width="0.22">3.666,39</text>
<text x="1490.90" y="657.50" font-size="11.4" fill="#718096" textLength="11.60" lengthAdjust="spacingAndGlyphs"  stroke="#718096" stroke-width="0.22">m²</text>
<text x="1427.90" y="682.30" font-size="11.4" fill="#4a5568" textLength="74.00" lengthAdjust="spacingAndGlyphs"  stroke="#4a5568" stroke-width="0.22">CA Meta de Q3:</text>
<path d="M1253.5 686V689A5 5 0 0 0 1258.5 693.8H1512.6A5 5 0 0 0 1517.6 689V686" fill="none" stroke="#e6ebf2" stroke-width="1"/>
<path d="M1253.5 717V714.1A5 5 0 0 1 1258.5 709.1H1512.6A5 5 0 0 1 1517.6 714.1V717" fill="none" stroke="#e6ebf2" stroke-width="1"/>
<text x="1264.40" y="728.00" font-size="13" fill="#151b29" font-weight="700" textLength="116.60" lengthAdjust="spacingAndGlyphs"  stroke="#151b29" stroke-width="0.12">Coeficientes urbanos</text>
<g stroke="#a0aec0" fill="none" stroke-width="0.9" stroke-linecap="round"><circle cx="1395.00" cy="724.40" r="5.25"/><path d="M1395.00 723.26V726.91"/><circle cx="1395.00" cy="721.55" r="0.2" /></g>
<rect x="1253.00" y="737.80" width="265.10" height="1.30" fill="#edf2f7" />
<text x="1264.50" y="758.50" font-size="11.4" fill="#1f2636" textLength="52.60" lengthAdjust="spacingAndGlyphs"  stroke="#1f2636" stroke-width="0.22">CA máximo</text>
<text x="1321.00" y="757.02" font-size="9" fill="#f0424a"  stroke="#f0424a" stroke-width="0.2">*</text>
<rect x="1427.70" y="747.00" width="78.20" height="16.20" rx="4.5" fill="#fff" stroke="#e4e9f0" stroke-width="1" />
<text x="1264.50" y="783.40" font-size="11.4" fill="#1f2636" textLength="45.70" lengthAdjust="spacingAndGlyphs"  stroke="#1f2636" stroke-width="0.22">CA básico</text>
<text x="1314.10" y="781.92" font-size="9" fill="#f0424a"  stroke="#f0424a" stroke-width="0.2">*</text>
<rect x="1427.70" y="771.90" width="78.20" height="16.20" rx="4.5" fill="#fff" stroke="#e4e9f0" stroke-width="1" />
<text x="1264.50" y="808.00" font-size="11.4" fill="#1f2636" textLength="118.70" lengthAdjust="spacingAndGlyphs"  stroke="#1f2636" stroke-width="0.22">Taxa de ocupação máxima</text>
<text x="1387.10" y="806.52" font-size="9" fill="#f0424a"  stroke="#f0424a" stroke-width="0.2">*</text>
<rect x="1427.70" y="796.50" width="78.20" height="16.10" rx="4.5" fill="#fff" stroke="#e4e9f0" stroke-width="1" />
<text x="1264.50" y="832.70" font-size="11.4" fill="#1f2636" textLength="144.50" lengthAdjust="spacingAndGlyphs"  stroke="#1f2636" stroke-width="0.22">Taxa de permeabilidade mínima</text>
<text x="1412.90" y="831.22" font-size="9" fill="#f0424a"  stroke="#f0424a" stroke-width="0.2">*</text>
<rect x="1427.70" y="821.20" width="78.20" height="15.90" rx="4.5" fill="#fff" stroke="#e4e9f0" stroke-width="1" />
<text x="1482.00" y="759.40" font-size="11.4" fill="#4a5568" textLength="20.60" lengthAdjust="spacingAndGlyphs"  stroke="#4a5568" stroke-width="0.22">5,00</text>
<text x="1482.60" y="784.20" font-size="11.4" fill="#4a5568" textLength="20.00" lengthAdjust="spacingAndGlyphs"  stroke="#4a5568" stroke-width="0.22">1,00</text>
<text x="1463.90" y="808.70" font-size="11.4" fill="#4a5568" textLength="26.60" lengthAdjust="spacingAndGlyphs"  stroke="#4a5568" stroke-width="0.22">80,00</text>
<text x="1494.80" y="808.70" font-size="11.4" fill="#718096" textLength="7.80" lengthAdjust="spacingAndGlyphs"  stroke="#718096" stroke-width="0.22">%</text>
<text x="1463.90" y="833.30" font-size="11.4" fill="#4a5568" textLength="26.60" lengthAdjust="spacingAndGlyphs"  stroke="#4a5568" stroke-width="0.22">20,00</text>
<text x="1494.80" y="833.30" font-size="11.4" fill="#718096" textLength="7.80" lengthAdjust="spacingAndGlyphs"  stroke="#718096" stroke-width="0.22">%</text>
<rect x="1529.20" y="579.60" width="277.60" height="269.40" rx="13" fill="#484d3b" />
<rect x="1533.00" y="583.60" width="270.00" height="261.50" rx="9" fill="#ffffff" />
<rect x="1552.40" y="600.00" width="31.80" height="32.10" rx="5.5" fill="#e8e6ff" />
<g transform="translate(1558.4,605.6) scale(0.84)" fill="none" stroke="#5b4ff0" stroke-width="1.7" stroke-linecap="round" stroke-linejoin="round"><path d="M2 21h20"/><path d="M4 21V9l7 -6.5h1.5V21"/><path d="M12.5 8.5H19V21"/><path d="M7 12v.01M9.8 12v.01M7 16v.01M9.8 16v.01"/></g>
<text x="1598.10" y="612.60" font-size="12.2" fill="#151b29" textLength="69.70" lengthAdjust="spacingAndGlyphs"  stroke="#151b29" stroke-width="0.3">TERRENO G</text>
<text x="1598.10" y="628.40" font-size="11.8" fill="#718096" textLength="102.80" lengthAdjust="spacingAndGlyphs"  stroke="#718096" stroke-width="0.22">08/10/2025 às 21:22</text>
<circle cx="1778.6" cy="611.7" r="1.65" fill="#2c3a57"/>
<circle cx="1778.6" cy="616.7" r="1.65" fill="#2c3a57"/>
<circle cx="1778.6" cy="621.6" r="1.65" fill="#2c3a57"/>
<rect x="1552.80" y="648.70" width="233.80" height="175.90" rx="8" fill="#f5f9fd" />
<g transform="translate(1570,695) scale(0.08584)">
<path d="M140 800L250 240L555 285L575 160L1965 330L2093 255L2185 365L2115 800Z" fill="#d1dfc1" stroke="#2f3d5c" stroke-width="17"/>
<path d="M1120 800V658H1335L1700 548L2150 575L2115 800Z" fill="#a7c191" stroke="#8fae79" stroke-width="7"/>
<path d="M175 775L275 270L580 305L600 190L1970 355L2090 285L2150 365L2090 775Z" fill="none" stroke="#f58a8a" stroke-width="11" stroke-dasharray="34 24"/>
<path d="M140 800L250 240" stroke="#f4646c" stroke-width="18"/>
</g>
</svg>
</body></html>
